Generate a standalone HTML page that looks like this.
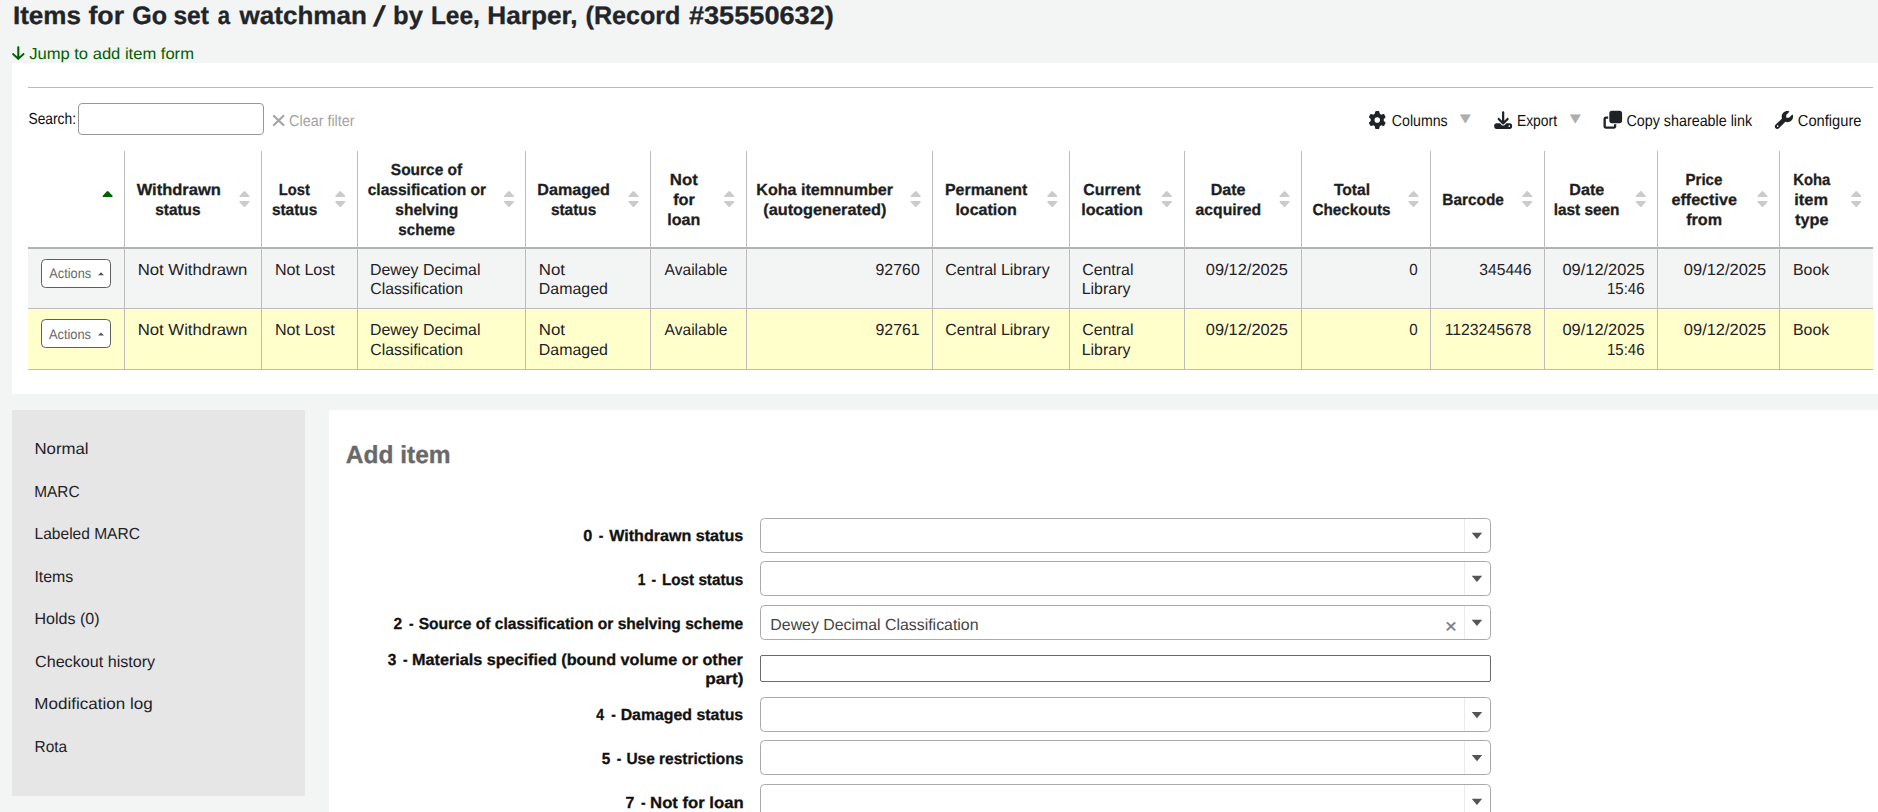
<!DOCTYPE html>
<html lang="en"><head><meta charset="utf-8"><title>Items for Go set a watchman</title>
<style>
*{margin:0;padding:0;box-sizing:border-box}
html,body{width:1878px;height:812px;overflow:hidden}
body{background:#f3f4f4;font-family:"Liberation Sans",sans-serif;position:relative;color:#1f2226}
/* every visible box is absolutely placed in page coordinates; wrappers (.g) are static and only give structure */
.g{position:static;display:block;font:inherit;list-style:none;border:0}
.a{position:absolute;display:block}
.t{position:absolute;display:block;white-space:nowrap;text-rendering:geometricPrecision;line-height:20px;font-weight:400;font-style:normal;text-decoration:none;transform-origin:0 50%}
.b{font-weight:700;-webkit-text-stroke:.3px}
.panel{background:#fff}
.vl{width:1px;top:151px;height:218px;background:#bcbcbc}
.hl{left:28px;width:1845px;height:1px;background:#bcbcbc}
.sel{left:759.5px;width:731px;height:34.5px;border:1px solid #aaa;border-radius:4.5px;background:#fff}
.sel i{position:absolute;right:24.7px;top:0;bottom:0;width:1px;background:#ebebeb}
.btn{left:41px;width:70px;height:29px;border:1px solid #5e5e5e;border-radius:4.5px;background:#fff}
input.a{appearance:none;-webkit-appearance:none;outline:0;background:#fff;font:inherit;color:inherit}
.ov{position:absolute;left:0;top:0;pointer-events:none}
</style></head>
<body>
<main class="g">
<h1 class="g">
<span class="t b" style="left:12px;top:6px;font-size:25.3px;color:#212529;transform:translateX(0.91px) scaleX(1.0299)">Items</span>
<span class="t b" style="left:88px;top:6px;font-size:25.3px;color:#212529;transform:translateX(0.44px) scaleX(1.0561)">for</span>
<span class="t b" style="left:132px;top:6px;font-size:25.3px;color:#212529;transform:translateX(0.22px) scaleX(0.9914)">Go</span>
<span class="t b" style="left:173px;top:6px;font-size:25.3px;color:#212529;transform:translateX(0.41px) scaleX(0.9694)">set</span>
<span class="t b" style="left:217px;top:6px;font-size:25.3px;color:#212529;transform:translateX(0.84px) scaleX(0.873)">a</span>
<span class="t b" style="left:239px;top:6px;font-size:25.3px;color:#212529;transform:translateX(0.54px) scaleX(1.0287)">watchman</span>
<span class="t b" style="left:375px;top:7px;font-size:28.5px;color:#212529;transform:translateX(0.03px) skewX(-14deg) scaleX(1.0362)">/</span>
<span class="t b" style="left:393px;top:6px;font-size:25.3px;color:#212529;transform:translateX(0.03px) scaleX(1.0106)">by</span>
<span class="t b" style="left:430px;top:6px;font-size:25.3px;color:#212529;transform:translateX(0.93px) scaleX(0.9662)">Lee,</span>
<span class="t b" style="left:487px;top:6px;font-size:25.3px;color:#212529;transform:translateX(0.29px) scaleX(1.0359)">Harper,</span>
<span class="t b" style="left:585px;top:6px;font-size:25.3px;color:#212529;transform:translateX(0.54px) scaleX(0.9927)">(Record</span>
<span class="t b" style="left:688px;top:6px;font-size:25.3px;color:#212529;transform:translateX(0.91px) scaleX(1.0729)">#35550632)</span>
</h1>
<p class="g"><a class="t" href="#" style="left:29px;top:45px;font-size:16px;color:#006100;transform:translateX(0.15px) scaleX(1.0352)">Jump to add item form</a></p>
<section class="g" id="items-table">
<div class="a panel" style="left:12px;top:63px;width:1866px;height:331px"></div>
<hr class="a" style="left:28px;top:87px;width:1845px;height:1px;border:0;background:#b9b9b9">
<div class="g" id="table-toolbar">
<label class="t" style="left:28px;top:110px;font-size:16px;color:#0b0c0d;transform:translateX(0.54px) scaleX(0.86)">Search:</label>
<input class="a" type="search" aria-label="Search" style="left:78px;top:103px;width:186px;height:32px;border:1px solid #979797;border-radius:4px">
<a class="t" href="#" style="left:289px;top:112px;font-size:15.6px;color:#a3a3a3;transform:translateX(0.08px) scaleX(0.9217)">Clear filter</a>
<a class="t" href="#" style="left:1391px;top:112px;font-size:15.9px;color:#0f1113;transform:translateX(0.8px) scaleX(0.8906)">Columns</a>
<span class="t" style="left:1459px;top:108px;font-size:11.8px;color:#adadad;font-family:'DejaVu Sans',sans-serif;transform:translateX(0.77px) scaleX(1.2232)">▼</span>
<a class="t" href="#" style="left:1516px;top:112px;font-size:15.9px;color:#0f1113;transform:translateX(0.92px) scaleX(0.8728)">Export</a>
<span class="t" style="left:1569px;top:108px;font-size:11.8px;color:#adadad;font-family:'DejaVu Sans',sans-serif;transform:translateX(0.77px) scaleX(1.2232)">▼</span>
<a class="t" href="#" style="left:1626px;top:112px;font-size:15.9px;color:#0f1113;transform:translateX(0.43px) scaleX(0.9008)">Copy shareable link</a>
<a class="t" href="#" style="left:1797px;top:112px;font-size:15.9px;color:#0f1113;transform:translateX(0.83px) scaleX(0.9243)">Configure</a>
</div>
<div class="g" role="table">
<div class="a" style="left:28px;top:249px;width:1845px;height:59px;background:#f3f4f4"></div>
<div class="a" style="left:28px;top:309px;width:1845px;height:60px;background:#ffffcc"></div>
<div class="a" style="left:28px;top:247px;width:1845px;height:2px;background:#b2b2b2"></div>
<div class="a hl" style="top:308px"></div>
<div class="a hl" style="top:369px"></div>
<div class="a vl" style="left:124px"></div>
<div class="a vl" style="left:261px"></div>
<div class="a vl" style="left:357px"></div>
<div class="a vl" style="left:525px"></div>
<div class="a vl" style="left:650px"></div>
<div class="a vl" style="left:746px"></div>
<div class="a vl" style="left:932px"></div>
<div class="a vl" style="left:1069px"></div>
<div class="a vl" style="left:1184px"></div>
<div class="a vl" style="left:1301px"></div>
<div class="a vl" style="left:1430px"></div>
<div class="a vl" style="left:1544px"></div>
<div class="a vl" style="left:1657px"></div>
<div class="a vl" style="left:1779px"></div>
<div class="g" role="row">
<div class="g" role="columnheader"></div>
<div class="g" role="columnheader"><b class="t b" style="left:136px;top:181px;font-size:16px;color:#1c1e21;transform:translateX(0.64px) scaleX(1.0313)">Withdrawn</b>
<b class="t b" style="left:155px;top:201px;font-size:16px;color:#1c1e21;transform:translateX(0.23px) scaleX(0.9614)">status</b></div>
<div class="g" role="columnheader"><b class="t b" style="left:278px;top:181px;font-size:16px;color:#1c1e21;transform:translateX(0.8px) scaleX(0.9203)">Lost</b>
<b class="t b" style="left:271px;top:201px;font-size:16px;color:#1c1e21;transform:translateX(0.92px) scaleX(0.9608)">status</b></div>
<div class="g" role="columnheader"><b class="t b" style="left:390px;top:161px;font-size:16px;color:#1c1e21;transform:translateX(0.85px) scaleX(0.966)">Source of</b>
<b class="t b" style="left:367px;top:181px;font-size:16px;color:#1c1e21;transform:translateX(0.67px) scaleX(0.972)">classification or</b>
<b class="t b" style="left:395px;top:201px;font-size:16px;color:#1c1e21;transform:translateX(0.29px) scaleX(0.9705)">shelving</b>
<b class="t b" style="left:398px;top:221px;font-size:16px;color:#1c1e21;transform:translateX(0.35px) scaleX(0.9491)">scheme</b></div>
<div class="g" role="columnheader"><b class="t b" style="left:537px;top:181px;font-size:16px;color:#1c1e21;transform:translateX(0.34px) scaleX(1.0081)">Damaged</b>
<b class="t b" style="left:550px;top:201px;font-size:16px;color:#1c1e21;transform:translateX(0.89px) scaleX(0.9627)">status</b></div>
<div class="g" role="columnheader"><b class="t b" style="left:669px;top:171px;font-size:16px;color:#1c1e21;transform:translateX(0.87px) scaleX(1.0478)">Not</b>
<b class="t b" style="left:673px;top:191px;font-size:16px;color:#1c1e21;transform:translateX(0.14px) scaleX(1.0204)">for</b>
<b class="t b" style="left:667px;top:211px;font-size:16px;color:#1c1e21;transform:translateX(0.2px) scaleX(1.0033)">loan</b></div>
<div class="g" role="columnheader"><b class="t b" style="left:756px;top:181px;font-size:16px;color:#1c1e21;transform:translateX(0.36px) scaleX(1.004)">Koha itemnumber</b>
<b class="t b" style="left:763px;top:201px;font-size:16px;color:#1c1e21;transform:translateX(0.21px) scaleX(1.0185)">(autogenerated)</b></div>
<div class="g" role="columnheader"><b class="t b" style="left:944px;top:181px;font-size:16px;color:#1c1e21;transform:translateX(0.93px) scaleX(0.9975)">Permanent</b>
<b class="t b" style="left:955px;top:201px;font-size:16px;color:#1c1e21;transform:translateX(0.39px) scaleX(1.0014)">location</b></div>
<div class="g" role="columnheader"><b class="t b" style="left:1083px;top:181px;font-size:16px;color:#1c1e21;transform:translateX(0.35px) scaleX(0.9885)">Current</b>
<b class="t b" style="left:1081px;top:201px;font-size:16px;color:#1c1e21;transform:translateX(0.16px) scaleX(1.0069)">location</b></div>
<div class="g" role="columnheader"><b class="t b" style="left:1210px;top:181px;font-size:16px;color:#1c1e21;transform:translateX(0.74px) scaleX(1.0028)">Date</b>
<b class="t b" style="left:1195px;top:201px;font-size:16px;color:#1c1e21;transform:translateX(0.57px) scaleX(0.9818)">acquired</b></div>
<div class="g" role="columnheader"><b class="t b" style="left:1333px;top:181px;font-size:16px;color:#1c1e21;transform:translateX(0.89px) scaleX(0.9751)">Total</b>
<b class="t b" style="left:1312px;top:201px;font-size:16px;color:#1c1e21;transform:translateX(0.43px) scaleX(0.9552)">Checkouts</b></div>
<div class="g" role="columnheader"><b class="t b" style="left:1442px;top:191px;font-size:16px;color:#1c1e21;transform:translateX(0.31px) scaleX(0.9623)">Barcode</b></div>
<div class="g" role="columnheader"><b class="t b" style="left:1569px;top:181px;font-size:16px;color:#1c1e21;transform:translateX(0.35px) scaleX(1.0064)">Date</b>
<b class="t b" style="left:1553px;top:201px;font-size:16px;color:#1c1e21;transform:translateX(0.7px) scaleX(0.961)">last seen</b></div>
<div class="g" role="columnheader"><b class="t b" style="left:1685px;top:171px;font-size:16px;color:#1c1e21;transform:translateX(0.42px) scaleX(0.9446)">Price</b>
<b class="t b" style="left:1671px;top:191px;font-size:16px;color:#1c1e21;transform:translateX(0.43px) scaleX(1.0081)">effective</b>
<b class="t b" style="left:1686px;top:211px;font-size:16px;color:#1c1e21;transform:translateX(0.15px) scaleX(1.0084)">from</b></div>
<div class="g" role="columnheader"><b class="t b" style="left:1793px;top:171px;font-size:16px;color:#1c1e21;transform:translateX(0.25px) scaleX(0.9249)">Koha</b>
<b class="t b" style="left:1794px;top:191px;font-size:16px;color:#1c1e21;transform:translateX(0.32px) scaleX(1.0232)">item</b>
<b class="t b" style="left:1795px;top:211px;font-size:16px;color:#1c1e21;transform:translateX(0.11px) scaleX(1.014)">type</b></div>
</div>
<div class="g" role="row">
<div class="g" role="cell"><div class="a btn" style="top:259.2px"></div><span class="t" style="left:49px;top:264px;font-size:13.8px;color:#696969;transform:translate(0.28px,0.1px) scaleX(0.927)">Actions</span></div>
<div class="g" role="cell"><span class="t" style="left:137px;top:261px;font-size:16px;color:#1f2226;transform:translateX(0.66px) scaleX(1.046)">Not Withdrawn</span></div>
<div class="g" role="cell"><span class="t" style="left:274px;top:261px;font-size:16px;color:#1f2226;transform:translateX(0.88px) scaleX(1.0054)">Not Lost</span></div>
<div class="g" role="cell"><span class="t" style="left:369px;top:261px;font-size:16px;color:#1f2226;transform:translateX(0.96px) scaleX(0.994)">Dewey Decimal</span>
<span class="t" style="left:370px;top:280px;font-size:16px;color:#1f2226;transform:translateX(0.32px) scaleX(0.9844)">Classification</span></div>
<div class="g" role="cell"><span class="t" style="left:538px;top:261px;font-size:16px;color:#1f2226;transform:translateX(0.77px) scaleX(1.0533)">Not</span>
<span class="t" style="left:538px;top:280px;font-size:16px;color:#1f2226;transform:translateX(0.87px) scaleX(0.9946)">Damaged</span></div>
<div class="g" role="cell"><span class="t" style="left:664px;top:261px;font-size:16px;color:#1f2226;transform:translateX(0.59px) scaleX(0.9738)">Available</span></div>
<div class="g" role="cell"><span class="t" style="left:875px;top:261px;font-size:16px;color:#1f2226;transform:translateX(0.52px) scaleX(0.9934)">92760</span></div>
<div class="g" role="cell"><span class="t" style="left:945px;top:261px;font-size:16px;color:#1f2226;transform:translateX(0.3px) scaleX(0.9939)">Central Library</span></div>
<div class="g" role="cell"><span class="t" style="left:1082px;top:261px;font-size:16px;color:#1f2226;transform:translateX(0.17px) scaleX(0.9934)">Central</span>
<span class="t" style="left:1081px;top:280px;font-size:16px;color:#1f2226;transform:translateX(0.68px) scaleX(0.9963)">Library</span></div>
<div class="g" role="cell"><span class="t" style="left:1205px;top:261px;font-size:16px;color:#1f2226;transform:translateX(0.84px) scaleX(1.0238)">09/12/2025</span></div>
<div class="g" role="cell"><span class="t" style="left:1409px;top:261px;font-size:16px;color:#1f2226;transform:translateX(0.21px) scaleX(0.9474)">0</span></div>
<div class="g" role="cell"><span class="t" style="left:1479px;top:261px;font-size:16px;color:#1f2226;transform:translateX(0.34px) scaleX(0.9772)">345446</span></div>
<div class="g" role="cell"><span class="t" style="left:1562px;top:261px;font-size:16px;color:#1f2226;transform:translateX(0.48px) scaleX(1.0245)">09/12/2025</span>
<span class="t" style="left:1606px;top:280px;font-size:16px;color:#1f2226;transform:translateX(0.99px) scaleX(0.9357)">15:46</span></div>
<div class="g" role="cell"><span class="t" style="left:1683px;top:261px;font-size:16px;color:#1f2226;transform:translateX(0.84px) scaleX(1.0279)">09/12/2025</span></div>
<div class="g" role="cell"><span class="t" style="left:1792px;top:261px;font-size:16px;color:#1f2226;transform:translateX(0.96px) scaleX(0.9932)">Book</span></div>
</div>
<div class="g" role="row">
<div class="g" role="cell"><div class="a btn" style="top:319.4px"></div><span class="t" style="left:48px;top:324px;font-size:13.8px;color:#696969;transform:translate(0.94px,0.9px) scaleX(0.9302)">Actions</span></div>
<div class="g" role="cell"><span class="t" style="left:137px;top:321px;font-size:16px;color:#1f2226;transform:translateX(0.66px) scaleX(1.046)">Not Withdrawn</span></div>
<div class="g" role="cell"><span class="t" style="left:274px;top:321px;font-size:16px;color:#1f2226;transform:translateX(0.88px) scaleX(1.0054)">Not Lost</span></div>
<div class="g" role="cell"><span class="t" style="left:369px;top:321px;font-size:16px;color:#1f2226;transform:translateX(0.96px) scaleX(0.994)">Dewey Decimal</span>
<span class="t" style="left:370px;top:341px;font-size:16px;color:#1f2226;transform:translateX(0.32px) scaleX(0.9844)">Classification</span></div>
<div class="g" role="cell"><span class="t" style="left:538px;top:321px;font-size:16px;color:#1f2226;transform:translateX(0.77px) scaleX(1.0533)">Not</span>
<span class="t" style="left:538px;top:341px;font-size:16px;color:#1f2226;transform:translateX(0.87px) scaleX(0.9946)">Damaged</span></div>
<div class="g" role="cell"><span class="t" style="left:664px;top:321px;font-size:16px;color:#1f2226;transform:translateX(0.59px) scaleX(0.9738)">Available</span></div>
<div class="g" role="cell"><span class="t" style="left:875px;top:321px;font-size:16px;color:#1f2226;transform:translateX(0.52px) scaleX(0.9927)">92761</span></div>
<div class="g" role="cell"><span class="t" style="left:945px;top:321px;font-size:16px;color:#1f2226;transform:translateX(0.3px) scaleX(0.9939)">Central Library</span></div>
<div class="g" role="cell"><span class="t" style="left:1082px;top:321px;font-size:16px;color:#1f2226;transform:translateX(0.17px) scaleX(0.9934)">Central</span>
<span class="t" style="left:1081px;top:341px;font-size:16px;color:#1f2226;transform:translateX(0.68px) scaleX(0.9963)">Library</span></div>
<div class="g" role="cell"><span class="t" style="left:1205px;top:321px;font-size:16px;color:#1f2226;transform:translateX(0.84px) scaleX(1.0238)">09/12/2025</span></div>
<div class="g" role="cell"><span class="t" style="left:1409px;top:321px;font-size:16px;color:#1f2226;transform:translateX(0.21px) scaleX(0.9474)">0</span></div>
<div class="g" role="cell"><span class="t" style="left:1444px;top:321px;font-size:16px;color:#1f2226;transform:translateX(0.63px) scaleX(0.987)">1123245678</span></div>
<div class="g" role="cell"><span class="t" style="left:1562px;top:321px;font-size:16px;color:#1f2226;transform:translateX(0.48px) scaleX(1.0245)">09/12/2025</span>
<span class="t" style="left:1606px;top:341px;font-size:16px;color:#1f2226;transform:translateX(0.99px) scaleX(0.9357)">15:46</span></div>
<div class="g" role="cell"><span class="t" style="left:1683px;top:321px;font-size:16px;color:#1f2226;transform:translateX(0.84px) scaleX(1.0279)">09/12/2025</span></div>
<div class="g" role="cell"><span class="t" style="left:1792px;top:321px;font-size:16px;color:#1f2226;transform:translateX(0.96px) scaleX(0.9932)">Book</span></div>
</div>
</div>
</section>
<nav class="g">
<div class="a" style="left:12px;top:410px;width:293px;height:386px;background:#e6e6e6"></div>
<ul class="g">
<li class="g"><a class="t" href="#" style="left:34px;top:440px;font-size:16px;color:#1f2226;transform:translateX(0.4px) scaleX(1.0506)">Normal</a></li>
<li class="g"><a class="t" href="#" style="left:34px;top:482px;font-size:16px;color:#1f2226;transform:translate(0.31px,0.5px) scaleX(0.9609)">MARC</a></li>
<li class="g"><a class="t" href="#" style="left:34px;top:525px;font-size:16px;color:#1f2226;transform:translateX(0.6px) scaleX(0.9706)">Labeled MARC</a></li>
<li class="g"><a class="t" href="#" style="left:34px;top:567px;font-size:16px;color:#1f2226;transform:translate(0.41px,0.5px) scaleX(0.9929)">Items</a></li>
<li class="g"><a class="t" href="#" style="left:34px;top:610px;font-size:16px;color:#1f2226;transform:translateX(0.48px) scaleX(1.0018)">Holds (0)</a></li>
<li class="g"><a class="t" href="#" style="left:35px;top:652px;font-size:16px;color:#1f2226;transform:translate(0.02px,0.5px) scaleX(1.0084)">Checkout history</a></li>
<li class="g"><a class="t" href="#" style="left:34px;top:695px;font-size:16px;color:#1f2226;transform:translateX(0.37px) scaleX(1.0638)">Modification log</a></li>
<li class="g"><a class="t" href="#" style="left:34px;top:737px;font-size:16px;color:#1f2226;transform:translate(0.61px,0.5px) scaleX(0.9635)">Rota</a></li>
</ul>
</nav>
<form class="g" id="additem" onsubmit="return false">
<div class="a panel" style="left:329px;top:410px;width:1549px;height:402px"></div>
<h2 class="t b" style="left:345px;top:446px;font-size:24.7px;color:#696969;transform:translateX(0.83px) scaleX(0.9923)">Add item</h2>
<div class="a sel" style="top:518px"><i></i></div>
<div class="a sel" style="top:561px"><i></i></div>
<div class="a sel" style="top:605px"><i></i></div>
<div class="a sel" style="top:697.2px"><i></i></div>
<div class="a sel" style="top:740.3px"><i></i></div>
<div class="a sel" style="top:784px"><i></i></div>
<input class="a" type="text" aria-label="Materials specified" style="left:759.5px;top:655px;width:731px;height:26.7px;border:1px solid #6b6b6b;border-radius:2px">
<label class="g">
<span class="t b" style="left:583px;top:527px;font-size:16px;color:#111;transform:translateX(0.33px) scaleX(1.017)">0</span>
<span class="t b" style="left:598px;top:527px;font-size:16px;color:#111;transform:translateX(0.81px) scaleX(0.86)">-</span>
<span class="t b" style="left:609px;top:527px;font-size:16px;color:#111;transform:translateX(0.24px) scaleX(1.0057)">Withdrawn status</span>
</label>
<label class="g">
<span class="t b" style="left:637px;top:571px;font-size:16px;color:#111;transform:translateX(0.71px) scaleX(0.86)">1</span>
<span class="t b" style="left:651px;top:571px;font-size:16px;color:#111;transform:translateX(0.6px) scaleX(0.86)">-</span>
<span class="t b" style="left:661px;top:571px;font-size:16px;color:#111;transform:translateX(0.96px) scaleX(0.9531)">Lost status</span>
</label>
<label class="g">
<span class="t b" style="left:393px;top:615px;font-size:16px;color:#111;transform:translateX(0.54px) scaleX(0.9654)">2</span>
<span class="t b" style="left:408px;top:615px;font-size:16px;color:#111;transform:translateX(0.9px) scaleX(0.86)">-</span>
<span class="t b" style="left:418px;top:615px;font-size:16px;color:#111;transform:translateX(0.63px) scaleX(0.9733)">Source of classification or shelving scheme</span>
</label>
<label class="g">
<span class="t b" style="left:387px;top:651px;font-size:16px;color:#111;transform:translateX(0.66px) scaleX(0.9633)">3</span>
<span class="t b" style="left:402px;top:651px;font-size:16px;color:#111;transform:translateX(0.9px) scaleX(0.86)">-</span>
<span class="t b" style="left:412px;top:651px;font-size:16px;color:#111;transform:translateX(0.02px) scaleX(1.0113)">Materials specified (bound volume or other</span>
<span class="t b" style="left:705px;top:670px;font-size:16px;color:#111;transform:translateX(0.17px) scaleX(1.0744)">part)</span>
</label>
<label class="g">
<span class="t b" style="left:596px;top:706px;font-size:16px;color:#111;transform:translateX(0.18px) scaleX(0.8788)">4</span>
<span class="t b" style="left:611px;top:706px;font-size:16px;color:#111;transform:translateX(0.25px) scaleX(0.86)">-</span>
<span class="t b" style="left:620px;top:706px;font-size:16px;color:#111;transform:translateX(0.66px) scaleX(0.9914)">Damaged status</span>
</label>
<label class="g">
<span class="t b" style="left:601px;top:750px;font-size:16px;color:#111;transform:translateX(0.71px) scaleX(0.9571)">5</span>
<span class="t b" style="left:616px;top:750px;font-size:16px;color:#111;transform:translateX(0.81px) scaleX(0.86)">-</span>
<span class="t b" style="left:626px;top:750px;font-size:16px;color:#111;transform:translateX(0.45px) scaleX(0.9659)">Use restrictions</span>
</label>
<label class="g">
<span class="t b" style="left:625px;top:794px;font-size:16px;color:#111;transform:translateX(0.46px) scaleX(0.9894)">7</span>
<span class="t b" style="left:640px;top:794px;font-size:16px;color:#111;transform:translateX(0.9px) scaleX(0.86)">-</span>
<span class="t b" style="left:650px;top:794px;font-size:16px;color:#111;transform:translateX(0.09px) scaleX(1.042)">Not for loan</span>
</label>
<span class="t" style="left:770px;top:616px;font-size:16px;color:#444;transform:translateX(0.34px) scaleX(0.9919)">Dewey Decimal Classification</span>
<span class="t" style="left:1445px;top:616px;font-size:20px;color:#7c7c7c;-webkit-text-stroke:0.3px;transform:translate(0.12px,0.8px) scaleX(1.0212)">×</span>
</form>
</main>
<svg class="ov" width="1878" height="812" viewBox="0 0 1878 812" aria-hidden="true">
<path fill="#006100" transform="translate(12.1 46.3) scale(0.03229 0.03036) translate(0 -32)" d="M169.400 470.600c12.500 12.500 32.800 12.500 45.300 0l160-160c12.500-12.500 12.500-32.800 0-45.300s-32.800-12.500-45.300 0L224 370.800 224 64c0-17.700-14.300-32-32-32s-32 14.300-32 32l0 306.700L54.600 265.400c-12.500-12.500-32.800-12.500-45.300 0s-12.500 32.800 0 45.300l160 160z"/>
<path d="M273.900 116L283.400 125M283.400 116L273.900 125" stroke="#a6a6a6" stroke-width="2.300" stroke-linecap="round" fill="none"/>
<path fill="#1f2226" transform="translate(1368.5 111) scale(0.03418 0.03516)" d="M495.900 166.600c3.200 8.700 .5 18.400-6.400 24.600l-43.300 39.400c1.100 8.300 1.700 16.800 1.700 25.400s-.6 17.100-1.700 25.400l43.300 39.400c6.900 6.200 9.600 15.900 6.400 24.600c-4.400 11.900-9.700 23.300-15.800 34.300l-4.700 8.100c-6.600 11-14 21.400-22.100 31.200c-5.900 7.200-15.700 9.600-24.500 6.800l-55.700-17.700c-13.400 10.300-28.200 18.900-44 25.400l-12.500 57.100c-2 9.100-9 16.300-18.200 17.800c-13.800 2.300-28 3.500-42.500 3.500s-28.700-1.200-42.500-3.500c-9.200-1.500-16.200-8.700-18.200-17.800l-12.500-57.100c-15.800-6.500-30.600-15.100-44-25.400L83.100 425.900c-8.800 2.800-18.600 .3-24.500-6.800c-8.100-9.800-15.500-20.200-22.100-31.200l-4.700-8.100c-6.100-11-11.400-22.400-15.800-34.300c-3.200-8.700-.5-18.400 6.400-24.600l43.300-39.400C64.600 273.100 64 264.600 64 256s.6-17.100 1.700-25.400L22.400 191.200c-6.900-6.200-9.600-15.900-6.400-24.600c4.400-11.900 9.700-23.300 15.800-34.300l4.700-8.100c6.600-11 14-21.400 22.100-31.200c5.900-7.200 15.700-9.600 24.500-6.800l55.700 17.700c13.400-10.300 28.200-18.900 44-25.400l12.500-57.100c2-9.100 9-16.300 18.200-17.800C227.300 1.200 241.500 0 256 0s28.700 1.200 42.500 3.500c9.200 1.500 16.200 8.700 18.200 17.800l12.500 57.100c15.800 6.500 30.600 15.100 44 25.400l55.700-17.700c8.800-2.800 18.600-.3 24.500 6.800c8.100 9.800 15.500 20.200 22.100 31.200l4.700 8.100c6.100 11 11.400 22.400 15.800 34.300zM256 336a80 80 0 1 0 0-160 80 80 0 1 0 0 160z"/>
<path fill="#1f2226" transform="translate(1494.2 111.2) scale(0.03496 0.03457)" d="M288 32c0-17.700-14.300-32-32-32s-32 14.300-32 32V274.700l-73.400-73.400c-12.500-12.500-32.800-12.500-45.300 0s-12.500 32.800 0 45.300l128 128c12.500 12.500 32.800 12.500 45.300 0l128-128c12.500-12.500 12.500-32.800 0-45.300s-32.800-12.500-45.300 0L288 274.700V32zM64 352c-35.300 0-64 28.700-64 64v32c0 35.300 28.700 64 64 64H448c35.300 0 64-28.700 64-64V416c0-35.300-28.700-64-64-64H346.500l-45.300 45.300c-25 25-65.500 25-90.500 0L165.500 352H64zm368 56a24 24 0 1 1 0 48 24 24 0 1 1 0-48z"/>
<path fill="#1f2226" transform="translate(1603.5 110.8) scale(0.03633 0.03516)" d="M288 448H64V224h64V160H64c-35.300 0-64 28.700-64 64V448c0 35.300 28.700 64 64 64H288c35.300 0 64-28.700 64-64V384H288v64zm-64-96H448c35.300 0 64-28.700 64-64V64c0-35.300-28.700-64-64-64H224c-35.300 0-64 28.700-64 64V288c0 35.300 28.700 64 64 64z"/>
<path fill="#1f2226" transform="translate(1774.8 111) scale(0.03574 0.03496)" d="M352 320c88.400 0 160-71.600 160-160c0-15.300-2.200-30.100-6.200-44.200c-3.100-10.800-16.400-13.200-24.300-5.300l-76.800 76.800c-3 3-7.100 4.700-11.300 4.700H336c-8.800 0-16-7.200-16-16V118.600c0-4.200 1.700-8.300 4.700-11.300l76.800-76.800c7.900-7.900 5.400-21.200-5.300-24.300C382.100 2.200 367.300 0 352 0C263.600 0 192 71.600 192 160c0 19.100 3.400 37.500 9.500 54.500L19.900 396.100C7.200 408.800 0 426.100 0 444.100C0 481.600 30.400 512 67.900 512c18 0 35.300-7.200 48-19.900L297.500 310.500c17 6.200 35.400 9.500 54.500 9.500zM80 408a24 24 0 1 1 0 48 24 24 0 1 1 0-48z"/>
<path fill="#006100" transform="translate(102.400 190.700)" d="M4.350 0.700Q5.250 -0.300 6.150 0.700L10.100 5Q10.900 6.300 9.500 6.300H1Q-0.400 6.300 0.400 5z"/>
<defs><path id="s" d="M4.350 0.700Q5.250 -0.300 6.150 0.700L10.100 5Q10.900 6.300 9.500 6.300H1Q-0.400 6.300 0.400 5z"/></defs>
<use href="#s" fill="#cbcbcb" x="239.2" y="190.800"/><use href="#s" fill="#cbcbcb" transform="translate(239.2 207.200) scale(1 -1)"/>
<use href="#s" fill="#cbcbcb" x="335" y="190.800"/><use href="#s" fill="#cbcbcb" transform="translate(335 207.200) scale(1 -1)"/>
<use href="#s" fill="#cbcbcb" x="503.75" y="190.800"/><use href="#s" fill="#cbcbcb" transform="translate(503.75 207.200) scale(1 -1)"/>
<use href="#s" fill="#cbcbcb" x="628.25" y="190.800"/><use href="#s" fill="#cbcbcb" transform="translate(628.25 207.200) scale(1 -1)"/>
<use href="#s" fill="#cbcbcb" x="724" y="190.800"/><use href="#s" fill="#cbcbcb" transform="translate(724 207.200) scale(1 -1)"/>
<use href="#s" fill="#cbcbcb" x="910.5" y="190.800"/><use href="#s" fill="#cbcbcb" transform="translate(910.5 207.200) scale(1 -1)"/>
<use href="#s" fill="#cbcbcb" x="1047" y="190.800"/><use href="#s" fill="#cbcbcb" transform="translate(1047 207.200) scale(1 -1)"/>
<use href="#s" fill="#cbcbcb" x="1161.5" y="190.800"/><use href="#s" fill="#cbcbcb" transform="translate(1161.5 207.200) scale(1 -1)"/>
<use href="#s" fill="#cbcbcb" x="1279.25" y="190.800"/><use href="#s" fill="#cbcbcb" transform="translate(1279.25 207.200) scale(1 -1)"/>
<use href="#s" fill="#cbcbcb" x="1408.25" y="190.800"/><use href="#s" fill="#cbcbcb" transform="translate(1408.25 207.200) scale(1 -1)"/>
<use href="#s" fill="#cbcbcb" x="1522" y="190.800"/><use href="#s" fill="#cbcbcb" transform="translate(1522 207.200) scale(1 -1)"/>
<use href="#s" fill="#cbcbcb" x="1635.5" y="190.800"/><use href="#s" fill="#cbcbcb" transform="translate(1635.5 207.200) scale(1 -1)"/>
<use href="#s" fill="#cbcbcb" x="1757.25" y="190.800"/><use href="#s" fill="#cbcbcb" transform="translate(1757.25 207.200) scale(1 -1)"/>
<use href="#s" fill="#cbcbcb" x="1851" y="190.800"/><use href="#s" fill="#cbcbcb" transform="translate(1851 207.200) scale(1 -1)"/>
<path fill="#555" d="M98 275.3l3-3l3 3z"/>
<path fill="#555" d="M98 335.5l3-3l3 3z"/>
<path fill="#555" d="M1471.700 532.8h10.500l-5.250 6.200z"/>
<path fill="#555" d="M1471.700 575.8h10.500l-5.250 6.200z"/>
<path fill="#555" d="M1471.700 619.8h10.500l-5.250 6.200z"/>
<path fill="#555" d="M1471.700 712h10.500l-5.250 6.200z"/>
<path fill="#555" d="M1471.700 755.1h10.500l-5.250 6.200z"/>
<path fill="#555" d="M1471.700 798.8h10.500l-5.250 6.200z"/>
</svg>
</body></html>
